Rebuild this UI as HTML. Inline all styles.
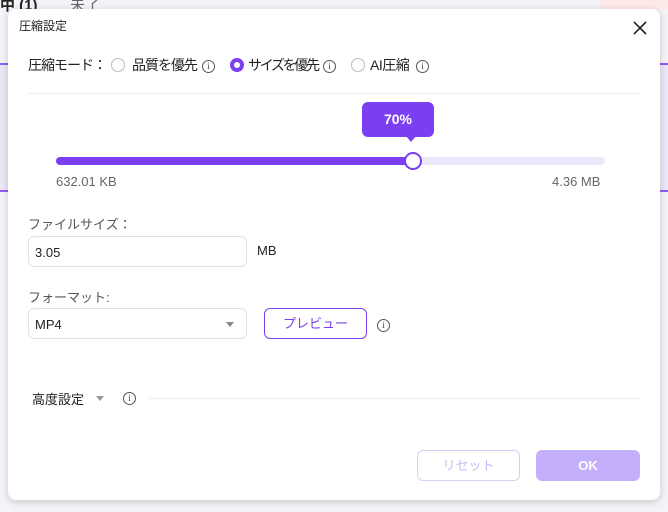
<!DOCTYPE html><html><head><meta charset="utf-8"><style>
*{margin:0;padding:0;box-sizing:border-box}
body{width:668px;height:512px;overflow:hidden;background:#f4f3f8;font-family:"Liberation Sans","Noto Sans CJK JP",sans-serif;position:relative;color:#222}
.a{position:absolute}
.dlg{left:8px;top:9px;width:652px;height:491px;background:#fff;border-radius:8px;box-shadow:0 2px 8px rgba(0,0,0,.18)}
.info{display:inline-block;width:13px;height:13px;border:1px solid #555;border-radius:50%;font-size:9px;line-height:11px;text-align:center;color:#444;font-family:"Liberation Serif",serif;vertical-align:middle}
.rad{position:absolute;width:14px;height:14px;border:1px solid #bbb;border-radius:50%}
.box{border:1px solid #e2e2e6;border-radius:6px;background:#fff}
.t14{font-size:14px;white-space:nowrap;letter-spacing:-1px;line-height:18px}
</style></head><body>
<div class="a" style="left:0;top:63px;width:668px;height:2px;background:#8b5cf6"></div>
<div class="a" style="left:0;top:65px;width:668px;height:125px;background:#ece8f7"></div>
<div class="a" style="left:0;top:190px;width:668px;height:2px;background:#8b5cf6"></div>
<div class="a" style="left:0;top:-6px;font-size:15px;font-weight:bold">中 (1)</div>
<div class="a" style="left:70px;top:-6px;font-size:15px;color:#666">未了</div>
<div class="a" style="left:600px;top:0;width:68px;height:9px;background:#fde8e8"></div>
<div class="a dlg"></div>
<div class="a" style="left:19px;top:17px;font-size:12px">圧縮設定</div>
<svg class="a" style="left:633px;top:21px" width="14" height="14"><path d="M1 1L13 13M13 1L1 13" stroke="#222" stroke-width="1.6"/></svg>
<div class="a t14" style="left:28px;top:56px">圧縮モード：</div>
<div class="rad" style="left:111px;top:58px"></div>
<div class="a t14" style="left:132px;top:56px">品質を優先</div>
<div class="a" style="left:202px;top:58px"><span class="info">i</span></div>
<div class="rad" style="left:230px;top:58px;border:4px solid #7b3ff2"></div>
<div class="a t14" style="left:248px;top:56px;letter-spacing:-2.3px">サイズを優先</div>
<div class="a" style="left:323px;top:58px"><span class="info">i</span></div>
<div class="rad" style="left:351px;top:58px"></div>
<div class="a t14" style="left:370px;top:56px;letter-spacing:-0.5px">AI圧縮</div>
<div class="a" style="left:416px;top:58px"><span class="info">i</span></div>
<div class="a" style="left:28px;top:93px;width:612px;height:1px;background:#eee"></div>
<div class="a" style="left:362px;top:102px;width:72px;height:35px;background:#7b3ff2;border-radius:6px;color:#fff;font-size:14px;font-weight:bold;text-align:center;line-height:35px">70%</div>
<div class="a" style="left:406px;top:136px;width:0;height:0;border-left:5px solid transparent;border-right:5px solid transparent;border-top:6px solid #7b3ff2"></div>
<div class="a" style="left:56px;top:157px;width:549px;height:8px;background:#ede7fc;border-radius:4px"></div>
<div class="a" style="left:56px;top:157px;width:357px;height:8px;background:#7b3ff2;border-radius:4px"></div>
<div class="a" style="left:404px;top:152px;width:18px;height:18px;background:#fff;border:2px solid #7b3ff2;border-radius:50%"></div>
<div class="a" style="left:56px;top:174px;font-size:13px;color:#666">632.01 KB</div>
<div class="a" style="left:552px;top:174px;font-size:13px;color:#666">4.36 MB</div>
<div class="a" style="left:28px;top:214px;font-size:13px;color:#555">ファイルサイズ：</div>
<div class="a box" style="left:28px;top:236px;width:219px;height:31px;font-size:13px;padding:8px 0 0 6px">3.05</div>
<div class="a" style="left:257px;top:243px;font-size:13px">MB</div>
<div class="a" style="left:28px;top:287px;font-size:13px;color:#555">フォーマット:</div>
<div class="a box" style="left:28px;top:308px;width:219px;height:31px;font-size:13px;padding:8px 0 0 6px">MP4</div>
<div class="a" style="left:226px;top:322px;width:0;height:0;border-left:4px solid transparent;border-right:4px solid transparent;border-top:5px solid #888"></div>
<div class="a" style="left:264px;top:308px;width:103px;height:31px;border:1px solid #7b3ff2;border-radius:6px;color:#7b3ff2;font-size:13px;text-align:center;line-height:29px">プレビュー</div>
<div class="a" style="left:377px;top:317px"><span class="info">i</span></div>
<div class="a" style="left:32px;top:389px;font-size:13px">高度設定</div>
<div class="a" style="left:96px;top:396px;width:0;height:0;border-left:4px solid transparent;border-right:4px solid transparent;border-top:5px solid #999"></div>
<div class="a" style="left:123px;top:390px"><span class="info">i</span></div>
<div class="a" style="left:148px;top:398px;width:492px;height:1px;background:#eee"></div>
<div class="a" style="left:417px;top:450px;width:103px;height:31px;border:1px solid #d9cdf8;border-radius:6px;color:#c9b6f8;font-size:13px;text-align:center;line-height:29px">リセット</div>
<div class="a" style="left:536px;top:450px;width:104px;height:31px;background:#c4b0fa;border-radius:6px;color:#fff;font-size:13px;font-weight:bold;text-align:center;line-height:31px">OK</div>
</body></html>
